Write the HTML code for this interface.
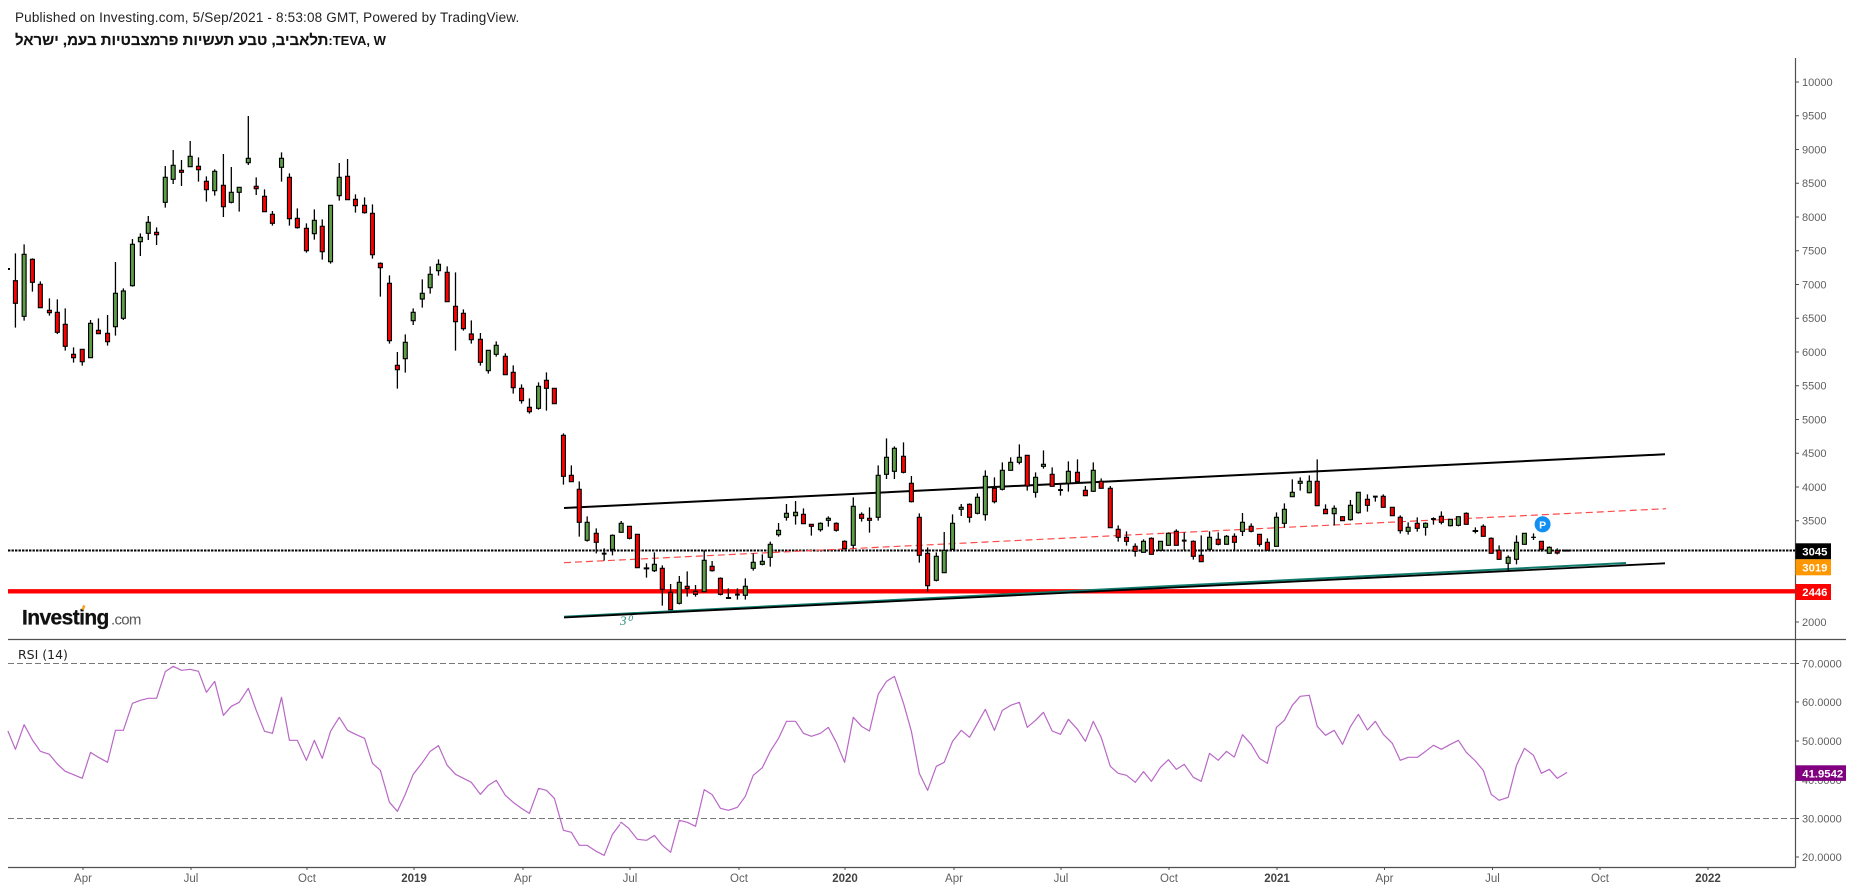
<!DOCTYPE html>
<html><head><meta charset="utf-8"><title>TEVA, W</title>
<style>
html,body{margin:0;padding:0;background:#fff;width:1853px;height:891px;overflow:hidden}
.t{position:absolute;white-space:nowrap}
svg{position:absolute;left:0;top:0}
svg text{font-family:"Liberation Sans",sans-serif}
.w{fill:none;stroke:#000;stroke-width:1.3;vector-effect:non-scaling-stroke}
.d{fill:none;stroke:#000;stroke-width:2;vector-effect:non-scaling-stroke}
.r{fill:#f00;stroke:#000;stroke-width:1.15;vector-effect:non-scaling-stroke}
.g{fill:#5e9e48;stroke:#000;stroke-width:1.15;vector-effect:non-scaling-stroke}
.s{fill:none;stroke:#b968c6;stroke-width:1.2;vector-effect:non-scaling-stroke;stroke-linejoin:round}
.p{fill:#5f5f5f;font-size:11px}
.x{fill:#5f5f5f;font-size:11.5px;text-anchor:middle}
.y{fill:#444;font-size:11.5px;font-weight:bold;text-anchor:middle}
.l{fill:#fff;font-size:11.3px;font-weight:bold}
</style></head><body>
<div class="t" style="left:15px;top:10px;font:13.5px/15px 'Liberation Sans',sans-serif;color:#222;letter-spacing:.18px">Published on Investing.com, 5/Sep/2021 - 8:53:08 GMT, Powered by TradingView.</div>
<div class="t" style="left:15px;top:32px;font:bold 13px/17px 'Liberation Sans',sans-serif;color:#111"><span style="font-size:15px;-webkit-text-stroke:.15px #111">תלאביב, טבע תעשיות פרמצבטיות בעמ, ישראל</span>:TEVA, W</div>
<svg width="1853" height="891" viewBox="0 0 1853 891" xmlns="http://www.w3.org/2000/svg">
<!-- frames -->
<g fill="none">
<path d="M8 639.5H1846M8 867.5H1795.5M1795.5 58V867.5" stroke="#505050" stroke-width="1.2"/>
<path d="M8 663.5H1795M8 818.5H1795" stroke="#777" stroke-width="1" stroke-dasharray="6 3"/>
<path d="M8 550.5H1795" stroke="#000" stroke-width="1.9" stroke-dasharray="2.4 1.1"/>
<path d="M8 591.3H1795" stroke="#f00" stroke-width="4.4"/>
<path d="M564 508L1665 454.3" stroke="#000" stroke-width="2"/>
<path d="M564 562.7L1666 508.7" stroke="#ff4a4a" stroke-width="1.2" stroke-dasharray="7 4"/>
<path d="M564 616.7L1626 563" stroke="#0f7a6c" stroke-width="2"/>
<path d="M564 617.5L1665 563.3" stroke="#000" stroke-width="1.8"/>
</g>
<text x="620" y="625" font-size="13" fill="#2a8a7c" style="font-family:'Liberation Serif',serif;font-style:italic">3⁰</text>
<rect x="8" y="268" width="2" height="2" fill="#000"/>

<!-- price axis ticks -->
<path d="M1795 82h4M1795 115.75h4M1795 149.5h4M1795 183.25h4M1795 217h4M1795 250.75h4M1795 284.5h4M1795 318.25h4M1795 352h4M1795 385.75h4M1795 419.5h4M1795 453.25h4M1795 487h4M1795 520.75h4M1795 622h4M1795 663.5h4M1795 702h4M1795 741h4M1795 780h4M1795 818.5h4M1795 857h4" stroke="#505050" stroke-width="1" fill="none"/>
<path d="M83 867v3M191 867v3M307 867v3M414 867v3M523 867v3M630 867v3M739 867v3M845 867v3M954 867v3M1061 867v3M1169 867v3M1277 867v3M1384.5 867v3M1492.5 867v3M1600 867v3M1708 867v3" stroke="#505050" stroke-width="1" fill="none"/>

<g class="p" >
<text class="p" x="1802" y="86">10000</text>
<text class="p" x="1802" y="119.5">9500</text>
<text class="p" x="1802" y="153.5">9000</text>
<text class="p" x="1802" y="187">8500</text>
<text class="p" x="1802" y="221">8000</text>
<text class="p" x="1802" y="254.5">7500</text>
<text class="p" x="1802" y="288.5">7000</text>
<text class="p" x="1802" y="322">6500</text>
<text class="p" x="1802" y="356">6000</text>
<text class="p" x="1802" y="389.5">5500</text>
<text class="p" x="1802" y="423.5">5000</text>
<text class="p" x="1802" y="457">4500</text>
<text class="p" x="1802" y="491">4000</text>
<text class="p" x="1802" y="524.5">3500</text>
<text class="p" x="1802" y="626">2000</text>
<text class="p" x="1802" y="667.5">70.0000</text>
<text class="p" x="1802" y="706">60.0000</text>
<text class="p" x="1802" y="745">50.0000</text>
<text class="p" x="1802" y="784">40.0000</text>
<text class="p" x="1802" y="822.5">30.0000</text>
<text class="p" x="1802" y="861">20.0000</text>
</g>

<text class="x" x="83" y="882">Apr</text><text class="x" x="191" y="882">Jul</text><text class="x" x="307" y="882">Oct</text><text class="y" x="414" y="882">2019</text>
<text class="x" x="523" y="882">Apr</text><text class="x" x="630" y="882">Jul</text><text class="x" x="739" y="882">Oct</text><text class="y" x="845" y="882">2020</text>
<text class="x" x="954" y="882">Apr</text><text class="x" x="1061" y="882">Jul</text><text class="x" x="1169" y="882">Oct</text><text class="y" x="1277" y="882">2021</text>
<text class="x" x="1384.5" y="882">Apr</text><text class="x" x="1492.5" y="882">Jul</text><text class="x" x="1600" y="882">Oct</text><text class="y" x="1708" y="882">2022</text>

<!-- Candles frame A -->
<g transform="scale(.3954 .33333)">
<path class="w" d="M39 760V983M61 733V962M82 775V875M102 844V923M125 895V947M145 898V1002M165 925V1052M186 1042V1088M208 1048V1097M229 960V1073M249 955V1001M272 945V1037M292 786V1007M312 865V960M335 717V860M355 700V768M375 648V720M396 682V735M418 498V623M438 450V552M459 480V558M481 423V500M502 472V545M522 529V605M543 508V587M565 462V651M585 501V610M605 562V635M628 348V495M648 532V585M669 568V635M689 633V677M712 457V545M732 520V677M752 625V686M775 670V758M795 628V719M815 658V779M836 616V791M858 489V602M879 477V599M899 583V638M922 592V641M942 613V776M962 787V890M985 826V1031M1005 1056V1166M1025 1003V1118M1045 925V975M1068 838V923M1088 799V881M1109 778V827M1131 799V905M1152 817V1052M1172 928V992M1192 961V1031M1215 999V1097M1235 1051V1121M1255 1024V1070M1278 1060V1124M1298 1096V1181M1319 1153V1211M1339 1195V1241M1362 1147V1229M1382 1117V1232M1402 1165V1211M1425 1300V1454M1445 1396V1445M1465 1444V1610M1485 1549V1625M1508 1585V1660M1528 1645V1682M1549 1603V1666"/>
<path class="d" d="M1522 1661H1534"/>
<path class="r" transform="translate(-.5 0)" d="M34.5 842h10V910h-10zM77.5 778h10V847h-10zM97.5 853h10V923h-10zM120.5 931h10V938h-10zM140.5 937h10V997h-10zM160.5 973h10V1039h-10zM181.5 1063h10V1073h-10zM203.5 1048h10V1085h-10zM244.5 991h10V1001h-10zM267.5 1000h10V1025h-10zM391.5 697h10V704h-10zM454.5 511h10V517h-10zM497.5 499h10V509h-10zM517.5 544h10V569h-10zM560.5 556h10V620h-10zM643.5 559h10V566h-10zM664.5 589h10V635h-10zM684.5 643h10V670h-10zM727.5 532h10V656h-10zM747.5 655h10V683h-10zM770.5 685h10V752h-10zM810.5 679h10V755h-10zM874.5 529h10V599h-10zM894.5 598h10V617h-10zM917.5 616h10V638h-10zM937.5 640h10V764h-10zM957.5 790h10V803h-10zM980.5 850h10V1022h-10zM1000.5 1096h10V1109h-10zM1126.5 817h10V905h-10zM1147.5 919h10V965h-10zM1167.5 940h10V986h-10zM1187.5 1002h10V1019h-10zM1210.5 1018h10V1087h-10zM1273.5 1069h10V1124h-10zM1293.5 1117h10V1163h-10zM1314.5 1165h10V1202h-10zM1334.5 1222h10V1235h-10zM1377.5 1141h10V1165h-10zM1397.5 1165h10V1211h-10zM1420.5 1306h10V1429h-10zM1440.5 1426h10V1445h-10zM1460.5 1468h10V1567h-10zM1503.5 1600h10V1627h-10z"/>
<path class="g" transform="translate(-.5 0)" d="M56.5 763h10V949h-10zM224.5 970h10V1073h-10zM287.5 880h10V980h-10zM307.5 873h10V955h-10zM330.5 733h10V857h-10zM350.5 712h10V725h-10zM370.5 667h10V700h-10zM413.5 532h10V607h-10zM433.5 496h10V538h-10zM476.5 469h10V500h-10zM538.5 514h10V572h-10zM580.5 577h10V607h-10zM600.5 562h10V577h-10zM623.5 475h10V488h-10zM707.5 475h10V502h-10zM790.5 661h10V701h-10zM831.5 616h10V785h-10zM853.5 532h10V587h-10zM1020.5 1027h10V1076h-10zM1040.5 937h10V962h-10zM1063.5 880h10V897h-10zM1083.5 823h10V863h-10zM1104.5 793h10V812h-10zM1230.5 1051h10V1112h-10zM1250.5 1036h10V1063h-10zM1357.5 1159h10V1225h-10zM1480.5 1567h10V1621h-10zM1544.5 1606h10V1648h-10z"/>
</g>

<!-- Candles frame B -->
<g transform="translate(620 420) scale(.3954 .33333)">
<path class="w" d="M3 303V337M24 319V358M44 342V443M67 430V473M87 397V456M107 436V557M128 492V569M150 468V553M170 454V530M191 495V530M213 391V515M233 423V455M254 472V526M274 505V536M297 505V539M317 475V539M337 400V452M360 403V436M380 365V440M401 309V350M421 252V302M444 243V314M464 265V311M484 313V347M507 307V335M527 289V320M547 307V335M568 361V386M590 232V385M611 277V305M631 262V338M653 136V302M674 55V177M694 79V177M717 67V160M737 168V247M757 280V428M778 382V515M800 397V484M820 336V458M841 283V390M863 252V288M884 250V308M904 220V283M924 151V302M947 172V250M967 127V211M988 112V152M1010 73V133M1030 105V212M1051 157V233M1071 91V146M1093 142V200M1114 190V227M1134 124V215M1157 118V187M1177 198V227M1197 127V216M1217 175V205M1240 198V323M1260 316V365M1281 334V377M1303 370V410M1324 358V398M1344 352V404M1367 364V394M1387 337V376M1407 328V376M1427 337V391M1450 361V419M1470 346V425M1491 334V391M1513 337V376M1534 345V373M1554 340V391"/>
<path class="d" d="M60 445H74M268 534H281M291 524H303M1108 210H1120M1421 362H1433"/>
<path class="r" transform="translate(-.5 0)" d="M19.5 319h10V355h-10zM39.5 343h10V443h-10zM102.5 445h10V508h-10zM123.5 517h10V569h-10zM165.5 499h10V506h-10zM186.5 514h10V523h-10zM228.5 439h10V452h-10zM249.5 475h10V523h-10zM459.5 283h10V311h-10zM479.5 313h10V319h-10zM542.5 310h10V331h-10zM563.5 364h10V386h-10zM606.5 283h10V295h-10zM626.5 295h10V301h-10zM712.5 109h10V157h-10zM732.5 190h10V245h-10zM752.5 292h10V406h-10zM773.5 400h10V497h-10zM879.5 253h10V292h-10zM942.5 205h10V245h-10zM1025.5 106h10V198h-10zM1088.5 163h10V199h-10zM1152.5 157h10V185h-10zM1172.5 211h10V227h-10zM1212.5 184h10V205h-10zM1235.5 205h10V323h-10zM1255.5 328h10V352h-10zM1276.5 352h10V364h-10zM1298.5 379h10V394h-10zM1339.5 355h10V403h-10zM1402.5 334h10V376h-10zM1445.5 364h10V409h-10zM1465.5 406h10V425h-10zM1508.5 358h10V373h-10zM1549.5 349h10V367h-10z"/>
<path class="g" transform="translate(-.5 0)" d="M-1.5 310h10V337h-10zM82.5 433h10V452h-10zM145.5 487h10V550h-10zM208.5 421h10V515h-10zM312.5 499h10V526h-10zM332.5 427h10V445h-10zM355.5 424h10V433h-10zM375.5 373h10V412h-10zM396.5 331h10V344h-10zM416.5 280h10V292h-10zM439.5 277h10V287h-10zM502.5 310h10V329h-10zM522.5 295h10V301h-10zM585.5 259h10V376h-10zM648.5 166h10V292h-10zM669.5 112h10V163h-10zM689.5 85h10V154h-10zM795.5 409h10V481h-10zM815.5 391h10V458h-10zM836.5 310h10V388h-10zM858.5 262h10V268h-10zM899.5 232h10V280h-10zM919.5 169h10V284h-10zM962.5 151h10V208h-10zM983.5 127h10V151h-10zM1005.5 112h10V127h-10zM1046.5 172h10V217h-10zM1066.5 133h10V139h-10zM1129.5 154h10V190h-10zM1192.5 151h10V214h-10zM1319.5 364h10V397h-10zM1362.5 364h10V391h-10zM1382.5 340h10V376h-10zM1486.5 352h10V388h-10zM1529.5 349h10V373h-10z"/>
</g>

<!-- Candles frame C -->
<g transform="translate(1233 420) scale(.3954 .33333)">
<path class="w" d="M24 279V348M46 310V337M67 343V380M87 355V391M110 277V380M130 250V323M150 178V230M170 172V212M193 166V220M213 118V257M234 253V281M256 256V316M277 289V302M297 240V302M317 217V281M340 223V275M360 229V245M380 223V263M403 262V287M423 286V341M443 307V344M466 292V335M487 307V347M507 292V314M527 274V313M550 298V319M570 289V319M590 277V314M613 322V340M633 313V350M653 352V400M673 376V420M696 406V455M717 346V433M737 340V374M760 340V360M780 364V395M800 379V401M820 385V403"/>
<path class="d" d="M354 230H366M501 297H513M606 333H620M835 392H852"/>
<path class="w" d="M754 352H766"/>
<path class="r" transform="translate(-.5 0)" d="M41.5 319h10V334h-10zM62.5 343h10V373h-10zM82.5 367h10V391h-10zM208.5 184h10V257h-10zM229.5 268h10V281h-10zM272.5 290h10V302h-10zM335.5 238h10V256h-10zM375.5 229h10V262h-10zM398.5 262h10V287h-10zM418.5 292h10V332h-10zM461.5 310h10V325h-10zM522.5 289h10V307h-10zM585.5 280h10V313h-10zM628.5 319h10V349h-10zM648.5 355h10V400h-10zM668.5 391h10V418h-10zM775.5 364h10V388h-10zM815.5 392h10V399h-10z"/>
<path class="g" transform="translate(-.5 0)" d="M19.5 307h10V334h-10zM105.5 292h10V379h-10zM125.5 268h10V310h-10zM145.5 217h10V230h-10zM165.5 184h10V190h-10zM188.5 184h10V218h-10zM251.5 265h10V281h-10zM292.5 256h10V299h-10zM312.5 217h10V278h-10zM438.5 322h10V334h-10zM482.5 310h10V322h-10zM545.5 298h10V317h-10zM565.5 290h10V316h-10zM691.5 412h10V430h-10zM712.5 367h10V418h-10zM732.5 340h10V373h-10zM795.5 382h10V400h-10z"/>
</g>

<!-- RSI -->
<g transform="translate(0 630) scale(.3954 .33333)"><polyline class="s" points="20,303 39,358 61,284 82,330 102,364 125,373 145,402 165,424 186,434 208,445 229,367 249,382 272,397 292,301 312,301 335,220 355,211 375,205 396,205 418,125 438,109 459,121 481,118 502,124 522,187 543,154 565,256 585,229 605,217 628,175 648,241 669,304 689,310 712,202 732,331 752,331 775,391 795,331 815,385 836,304 858,262 879,301 899,313 922,325 942,400 962,421 985,517 1005,544 1025,493 1045,433 1068,398 1088,364 1109,347 1131,406 1152,433 1172,445 1192,457 1215,493 1235,466 1255,451 1278,496 1298,517 1319,535 1339,550 1362,475 1382,481 1402,505 1425,601 1445,607 1465,646 1485,646 1508,664 1528,676 1549,613 1568,583"/></g>
<g transform="translate(620 630) scale(.3954 .33333)"><polyline class="s" points="0,580 3,577 22,595 44,628 67,631 87,616 107,646 128,667 150,571 170,577 191,589 213,479 233,494 254,535 274,541 297,532 317,499 337,436 360,413 380,364 401,325 421,274 444,274 464,310 484,319 507,310 527,292 547,337 568,397 590,262 611,289 631,303 653,193 674,154 694,139 717,220 737,304 757,430 778,481 800,409 820,397 841,334 863,301 884,322 904,280 924,238 947,301 967,241 988,226 1010,217 1030,292 1051,271 1071,247 1093,303 1114,313 1134,268 1157,298 1177,334 1197,274 1217,322 1240,409 1260,430 1281,436 1303,457 1324,425 1344,454 1367,412 1387,389 1407,418 1427,403 1450,442 1470,454 1491,370 1513,391 1534,364 1554,382"/></g>
<g transform="translate(1233 630) scale(.3954 .33333)"><polyline class="s" points="3,382 24,314 46,343 67,385 87,400 110,292 130,271 150,226 170,199 193,196 213,289 234,316 256,301 277,343 297,290 317,253 340,300 360,274 380,313 403,340 423,391 443,382 466,382 487,364 507,346 527,358 550,343 570,331 590,367 613,393 633,421 653,493 673,511 696,502 717,406 737,355 760,376 780,430 800,418 820,445 845,427"/></g>

<!-- P marker -->
<circle cx="1542.6" cy="524.3" r="8" fill="#118ff2"/>
<text x="1542.6" y="528.3" font-size="10.5" font-weight="bold" fill="#fff" text-anchor="middle">P</text>

<!-- Price labels -->
<rect x="1795.5" y="543.3" width="35.5" height="16" fill="#000"/><text class="l" x="1802.3" y="555.4">3045</text>
<rect x="1795.5" y="559.3" width="35.5" height="16" fill="#ff9800"/><text class="l" x="1802.3" y="571.4">3019</text>
<rect x="1795.5" y="584" width="35.5" height="16" fill="#f00"/><text class="l" x="1802.3" y="596.1">2446</text>
<rect x="1795.5" y="765.3" width="50.5" height="15.6" fill="#800080"/><text class="l" x="1802.3" y="777.3">41.9542</text>

<!-- Logo -->
<text x="22" y="624.5" font-size="21" font-weight="bold" fill="#111" stroke="#111" stroke-width=".3" letter-spacing="-.6">Investing</text>
<text x="111" y="624.5" font-size="15" fill="#555" letter-spacing="-.7">.com</text>
<path d="M81.5 609.5l1.6-4.5 2.4.8-1.6 4.2z" fill="#f9a01b"/>
</svg>
<div class="t" style="left:18px;top:647px;font:12.5px/16px 'DejaVu Sans',sans-serif;color:#222">RSI (14)</div>
</body></html>
